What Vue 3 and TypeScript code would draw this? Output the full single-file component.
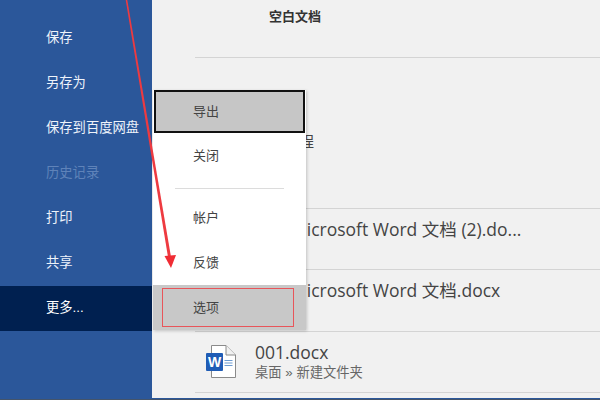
<script setup lang="ts">
const navItems = [
  { label: '保存' },
  { label: '另存为' },
  { label: '保存到百度网盘' },
  { label: '历史记录', muted: true },
  { label: '打印' },
  { label: '共享' },
  { label: '更多...', active: true },
]
</script>

<template>
  <div class="app">
    <aside class="sidebar">
      <div
        v-for="item in navItems"
        :key="item.label"
        class="nav-item"
        :class="{ muted: item.muted, active: item.active }"
      >{{ item.label }}</div>
    </aside>

    <main class="main">
      <div class="blank-row"><span class="blank-title">空白文档</span></div>
      <div class="row project-row"><span class="doc-name">工程</span></div>
      <div class="row doc-row"><span class="doc-name">Microsoft Word 文档 (2).do...</span></div>
      <div class="row doc-row"><span class="doc-name">Microsoft Word 文档.docx</span></div>
      <div class="row last-row">
        <svg class="word-icon" width="30" height="33" viewBox="0 0 30 33" aria-hidden="true">
          <path d="M5.5 0.5H20L29.5 10V32.5H5.5Z" fill="#fff" stroke="#8a8a8a" />
          <path d="M20 0.5V10H29.5" fill="#f1f1f1" stroke="#8a8a8a" />
          <path d="M18.5 15.5H26.5M18.5 18H26.5M18.5 20.5H26.5" stroke="#6d9bd1" stroke-width="1.2" />
          <rect x="0" y="8" width="17" height="18" rx="1" fill="#1f5cb5" />
          <text x="8.5" y="22" text-anchor="middle" class="word-w">W</text>
        </svg>
        <div class="doc-text">
          <span class="doc-name">001.docx</span>
          <span class="doc-path">桌面 » 新建文件夹</span>
        </div>
      </div>
    </main>

    <div class="menu">
      <div class="menu-item export">导出</div>
      <div class="menu-item">关闭</div>
      <div class="menu-sep"></div>
      <div class="menu-item">帐户</div>
      <div class="menu-item">反馈</div>
      <div class="menu-item selected"><span class="red-frame">选项</span></div>
    </div>

    <svg class="arrow" width="600" height="400" viewBox="0 0 600 400" aria-hidden="true">
      <path d="M125.7 0H127.3L171 257H168Z" fill="#ee3a40" />
      <path d="M164.5 256L176 255L171 268Z" fill="#f02c34" />
    </svg>
  </div>
</template>

<style>
body { margin: 0; }
</style>

<style scoped>
.app {
  position: relative;
  display: flex;
  width: 600px;
  height: 400px;
  box-sizing: border-box;
  overflow: hidden;
  background: #2b579a;
  border-bottom: 1px solid #44546a;
  font-family: "Liberation Sans", "Noto Sans CJK SC", sans-serif;
}
.sidebar {
  width: 152px;
  flex: none;
  padding-top: 16px;
  box-sizing: border-box;
  background: #2b579a;
}
.nav-item {
  height: 45px;
  box-sizing: border-box;
  display: flex;
  align-items: center;
  padding: 0 0 5px 46px;
  font-size: 13.3px;
  color: #eef3fa;
}
.nav-item.muted { color: #5f83b9; }
.nav-item.active { background: #002050; color: #fff; }

.main {
  flex: 1;
  height: 398px;
  background: #f1f1f1;
  padding-left: 43px;
  display: flex;
  flex-direction: column;
}
.blank-row {
  height: 58px;
  flex: none;
  box-sizing: border-box;
  padding: 7px 0 0 74px;
  border-bottom: 1px solid #d4d4d4;
  line-height: 17px;
}
.blank-title { font-size: 13px; font-weight: 700; color: #333; }
.row {
  flex: none;
  box-sizing: border-box;
  border-bottom: 1px solid #d4d4d4;
  display: flex;
}
.project-row { height: 151px; padding: 72px 0 0 74px; }
.project-row .doc-name { margin-left: 15px; font-size: 15px; }
.doc-row { height: 61px; padding: 9px 0 0 96px; }
.doc-row + .doc-row { height: 62px; }
.doc-name { font-size: 17.5px; line-height: 22px; color: #444; white-space: nowrap; font-family: "Open Sans", "Noto Sans CJK SC", sans-serif; }
.last-row { height: 61px; align-items: flex-start; padding: 13px 0 0 11px; gap: 19px; }
.word-icon { flex: none; }
.word-w { font: 700 14px "Liberation Sans", sans-serif; fill: #fff; }
.doc-text { display: flex; flex-direction: column; margin-top: -4px; }
.doc-path { font-size: 13.3px; line-height: 19px; color: #666; }

.menu {
  position: absolute;
  left: 153px;
  top: 90px;
  width: 153px;
  height: 240px;
  background: #fff;
  box-shadow: 1px 1px 3px rgba(0, 0, 0, 0.2);
}
.menu-item {
  height: 45px;
  box-sizing: border-box;
  display: flex;
  align-items: center;
  padding: 0 0 2px 40px;
  font-size: 13px;
  color: #444;
}
.menu-item.export {
  width: 151px;
  height: 43px;
  margin-left: 1px;
  background: #c6c6c6;
  border: 2px solid #111;
  padding: 0 0 3px 37px;
}
.menu-sep {
  height: 1px;
  margin: 10px 22px 6px 22px;
  background: #dcdcdc;
}
.menu-item.selected {
  padding: 3px 12px 3px 9px;
  background: #c8c8c8;
  align-items: stretch;
}
.red-frame {
  flex: 1;
  display: flex;
  align-items: center;
  padding: 0 0 3px 30px;
  border: 1px solid #e8555a;
}
.arrow {
  position: absolute;
  left: 0;
  top: 0;
  pointer-events: none;
}
</style>
